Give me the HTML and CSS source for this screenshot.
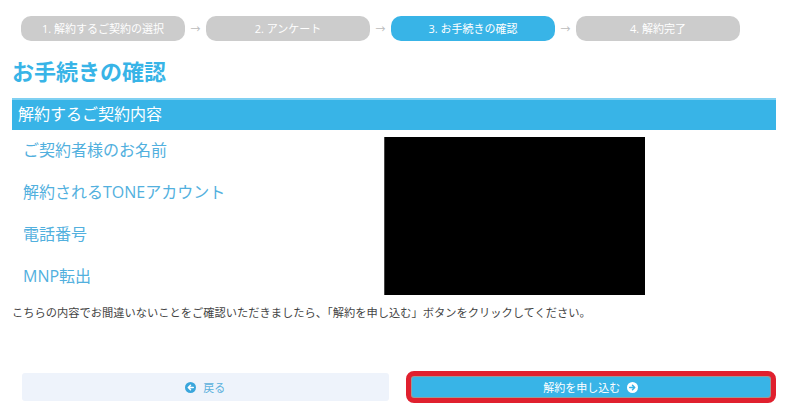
FILE: index.html
```html
<!DOCTYPE html>
<html lang="ja">
<head>
<meta charset="utf-8">
<link rel="stylesheet" href="styles.css">
</head>
<body>
<div class="page">
  <ol class="steps">
    <li class="step">1. 解約するご契約の選択</li>
    <li class="arrow">→</li>
    <li class="step">2. アンケート</li>
    <li class="arrow">→</li>
    <li class="step active">3. お手続きの確認</li>
    <li class="arrow">→</li>
    <li class="step">4. 解約完了</li>
  </ol>
  <h1 class="title">お手続きの確認</h1>
  <section class="contract">
    <h2 class="bar">解約するご契約内容</h2>
    <div class="detail">
      <ul class="labels">
        <li>ご契約者様のお名前</li>
        <li>解約されるTONEアカウント</li>
        <li>電話番号</li>
        <li>MNP転出</li>
      </ul>
      <div class="redacted"></div>
    </div>
  </section>
  <p class="note">こちらの内容でお間違いないことをご確認いただきましたら、「解約を申し込む」ボタンをクリックしてください。</p>
  <div class="actions">
    <button class="btn back"><svg class="ico" viewBox="0 0 16 16"><circle cx="8" cy="8" r="8" fill="#3aa6dc"/><path d="M12 8H5.2M8 4.8L4.8 8 8 11.2" stroke="#fff" stroke-width="2.2" fill="none" stroke-linecap="round" stroke-linejoin="round"/></svg>戻る</button>
    <div class="submit-wrap"><button class="btn submit">解約を申し込む<svg class="ico" viewBox="0 0 16 16"><circle cx="8" cy="8" r="8" fill="#fff"/><path d="M4 8h6.8M8 4.8L11.2 8 8 11.2" stroke="#38b4e7" stroke-width="2.2" fill="none" stroke-linecap="round" stroke-linejoin="round"/></svg></button></div>
  </div>
</div>
</body>
</html>
```
FILE: styles.css
```css
* { box-sizing: border-box; }
html, body { margin: 0; padding: 0; background: #fff; }
body { font-family: "Open Sans", "Noto Sans CJK JP", sans-serif; color: #444; }
.page { width: 800px; height: 412px; padding: 16px 24px 0 12px; }
.steps { list-style: none; margin: 0 0 0 9px; padding: 0; display: flex; align-items: center; height: 25px; }
.step { width: 164px; height: 25px; border-radius: 10px; background: #cccccc; color: #fff; font-size: 11px; display: flex; align-items: center; justify-content: center; line-height: 1; }
.step.active { background: #38b4e7; }
.arrow { width: 21px; text-align: center; color: #bbb; font-size: 10px; }
.title { margin: 17px 0 0; height: 25px; font-size: 22px; font-weight: 700; color: #38b4e7; line-height: 25px; letter-spacing: 0; font-family: "Noto Sans CJK JP", sans-serif; }
.contract { margin-top: 15px; width: 764px; }
.bar { margin: 0; height: 32px; background: #38b4e7; border-top: 2px solid #7fd0f2; color: #fff; font-size: 16px; font-weight: 400; line-height: 29px; padding-left: 6px; }
.detail { display: flex; }
.labels { list-style: none; margin: 0; padding: 0 0 0 11px; width: 372px; }
.labels li { height: 42px; line-height: 41px; font-size: 16px; color: #52b0de; }
.redacted { width: 261px; height: 158px; margin-top: 7px; background: #000; border-left: 1px solid #444; }
.note { margin: 7px 0 0; font-size: 11.25px; line-height: 16px; color: #444; white-space: nowrap; }
.actions { display: flex; align-items: center; margin-top: 50px; padding-left: 10px; gap: 17px; }
.btn { font-family: inherit; font-size: 11px; border: 0; display: flex; align-items: center; justify-content: center; gap: 7px; cursor: pointer; }
.ico { width: 11px; height: 11px; display: block; }
.back { width: 368px; height: 28px; background: #eef3fb; color: #5ab0dc; border-radius: 3px; }
.submit-wrap { width: 372px; height: 32px; border: 5px solid #e0202e; border-radius: 8px; background: #999; padding: 1px; display: flex; }
.submit { flex: 1; height: 100%; background: #38b4e7; color: #fff; border-radius: 3px; }
```
